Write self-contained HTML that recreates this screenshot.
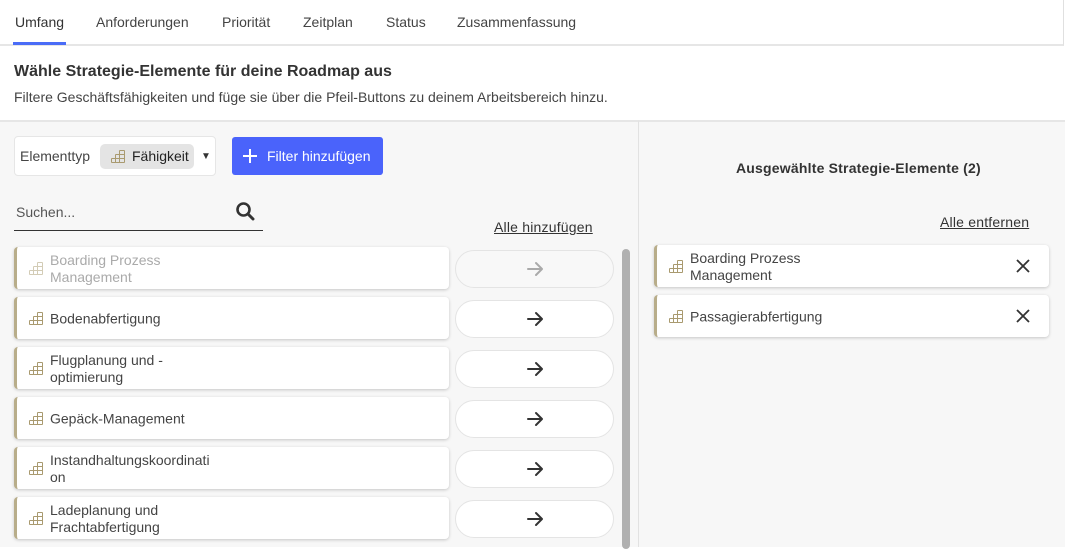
<!DOCTYPE html><html><head><meta charset="utf-8"><style>
*{box-sizing:border-box;margin:0;padding:0}
body{width:1065px;height:547px;overflow:hidden;font-family:"Liberation Sans",sans-serif;background:#fff;color:#333;position:relative}
.tabs{position:absolute;left:0;top:0;width:1064px;height:46px;border-right:1px solid #e0e0e0;border-bottom:2px solid #e6e6e6}
.tab{position:absolute;top:14px;font-size:14px;color:#444}
.ul{position:absolute;left:13px;top:42px;width:53px;height:3px;background:#4a6cf7}
h1{position:absolute;left:14px;top:63px;font-size:16px;font-weight:bold;color:#333}
.sub{position:absolute;left:14px;top:89px;font-size:14px;color:#444}
.left{position:absolute;left:0;top:120px;width:638px;height:427px;background:#f7f7f7;border-top:2px solid #e6e6e6}
.right{position:absolute;left:638px;top:120px;width:427px;height:427px;background:#f7f7f7;border-top:2px solid #e6e6e6;border-left:1px solid #e2e2e2}
.abs{position:absolute}
.card{position:absolute;left:14px;width:435px;height:42px;background:#fff;border-left:3px solid #b8ad8a;border-radius:4px;box-shadow:0 1px 3px rgba(0,0,0,.2);font-size:14px;color:#444}
.card .t{position:absolute;left:33px;top:22px;transform:translateY(-50%);line-height:17px}
.card svg{position:absolute;left:11px;top:14px}
.btn{position:absolute;left:455px;width:159px;height:38px;background:#fff;border:1px solid #e4e4e4;border-radius:19px}
.btn svg{position:absolute;left:70px;top:9px}
.rc{position:absolute;left:654px;width:395px;height:42px;background:#fff;border-left:3px solid #b8ad8a;border-radius:4px;box-shadow:0 1px 3px rgba(0,0,0,.2);font-size:14px;color:#444}
.rc .t{position:absolute;left:33px;top:22px;transform:translateY(-50%);line-height:17px}
.rc svg.i{position:absolute;left:11px;top:14px}
.rc .x{position:absolute;right:18px;top:13px}
</style></head><body>
<div class="tabs">
<span class="tab" style="left:15px;color:#333">Umfang</span>
<span class="tab" style="left:96px">Anforderungen</span>
<span class="tab" style="left:222px">Priorität</span>
<span class="tab" style="left:303px">Zeitplan</span>
<span class="tab" style="left:386px">Status</span>
<span class="tab" style="left:457px">Zusammenfassung</span>
<div class="ul"></div>
</div>
<h1>Wähle Strategie-Elemente für deine Roadmap aus</h1>
<div class="sub">Filtere Geschäftsfähigkeiten und füge sie über die Pfeil-Buttons zu deinem Arbeitsbereich hinzu.</div>
<div class="left"></div>
<div class="right"></div>

<svg width="0" height="0" style="position:absolute"><defs>
<g id="ic" fill="none" stroke="#a99a6f" stroke-width="1"><path d="M1.5 13.5h13M1.5 9.5h13M5.5 5.5h9M9.5 1.5h5M1.5 9.5v4M5.5 5.5v8M9.5 1.5v12M14.5 1.5v12"/></g>
<g id="ar" fill="none" stroke-width="2" stroke-linecap="round" stroke-linejoin="round"><path d="M2 9h14M10 3l6 6-6 6"/></g>
</defs></svg>

<div class="abs" style="left:14px;top:136px;width:202px;height:40px;background:#fff;border:1px solid #e6e6e6;border-radius:4px"></div>
<span class="abs" style="left:20px;top:148px;font-size:14px;color:#444">Elementtyp</span>
<div class="abs" style="left:100px;top:144px;width:94px;height:25px;background:#e4e4e4;border-radius:5px"></div>
<svg class="abs" style="left:110px;top:149px" width="16" height="15"><use href="#ic"/></svg>
<span class="abs" style="left:132px;top:148px;font-size:14px;color:#222">Fähigkeit</span>
<span class="abs" style="left:201px;top:151px;font-size:10px;color:#333">▼</span>
<div class="abs" style="left:232px;top:137px;width:151px;height:38px;background:#4a63fb;border-radius:3px;color:#fff;font-size:14px;line-height:38px;padding-left:35px">Filter hinzufügen</div>
<svg class="abs" style="left:242px;top:148px" width="16" height="16"><path d="M8 1v14M1 8h14" stroke="#fff" stroke-width="2"/></svg>

<span class="abs" style="left:16px;top:204px;font-size:14px;color:#555">Suchen...</span>
<svg class="abs" style="left:235px;top:201px" width="20" height="20"><circle cx="8.5" cy="8.5" r="6" fill="none" stroke="#333" stroke-width="2.6"/><path d="M13 13l5 5" stroke="#333" stroke-width="3" stroke-linecap="round"/></svg>
<div class="abs" style="left:14px;top:230px;width:249px;height:1px;background:#333"></div>
<span class="abs" style="left:494px;top:219px;font-size:14px;color:#333;text-decoration:underline;letter-spacing:.2px">Alle hinzufügen</span>

<div class="card" style="top:247px;color:#aaa"><svg width="16" height="15" style="opacity:.5"><use href="#ic"/></svg><div class="t">Boarding Prozess<br>Management</div></div>
<div class="card" style="top:297px"><svg width="16" height="15"><use href="#ic"/></svg><div class="t">Bodenabfertigung</div></div>
<div class="card" style="top:347px"><svg width="16" height="15"><use href="#ic"/></svg><div class="t">Flugplanung und -<br>optimierung</div></div>
<div class="card" style="top:397px"><svg width="16" height="15"><use href="#ic"/></svg><div class="t">Gepäck-Management</div></div>
<div class="card" style="top:447px"><svg width="16" height="15"><use href="#ic"/></svg><div class="t">Instandhaltungskoordinati<br>on</div></div>
<div class="card" style="top:497px"><svg width="16" height="15"><use href="#ic"/></svg><div class="t">Ladeplanung und<br>Frachtabfertigung</div></div>

<div class="btn" style="top:250px;background:#f8f8f8"><svg width="18" height="18" stroke="#aaa"><use href="#ar"/></svg></div>
<div class="btn" style="top:300px"><svg width="18" height="18" stroke="#333"><use href="#ar"/></svg></div>
<div class="btn" style="top:350px"><svg width="18" height="18" stroke="#333"><use href="#ar"/></svg></div>
<div class="btn" style="top:400px"><svg width="18" height="18" stroke="#333"><use href="#ar"/></svg></div>
<div class="btn" style="top:450px"><svg width="18" height="18" stroke="#333"><use href="#ar"/></svg></div>
<div class="btn" style="top:500px"><svg width="18" height="18" stroke="#333"><use href="#ar"/></svg></div>
<div class="abs" style="left:622px;top:249px;width:8px;height:300px;background:#b0b0b0;border-radius:4px"></div>

<span class="abs" style="left:736px;top:160px;font-size:14px;font-weight:bold;color:#333;letter-spacing:.2px">Ausgewählte Strategie-Elemente (2)</span>
<span class="abs" style="left:940px;top:214px;font-size:14px;color:#333;text-decoration:underline;letter-spacing:.2px">Alle entfernen</span>
<div class="rc" style="top:245px"><svg class="i" width="16" height="15"><use href="#ic"/></svg><div class="t">Boarding Prozess<br>Management</div><svg class="x" width="16" height="16"><path d="M2 2l12 12M14 2L2 14" stroke="#333" stroke-width="1.8"/></svg></div>
<div class="rc" style="top:295px"><svg class="i" width="16" height="15"><use href="#ic"/></svg><div class="t">Passagierabfertigung</div><svg class="x" width="16" height="16"><path d="M2 2l12 12M14 2L2 14" stroke="#333" stroke-width="1.8"/></svg></div>
</body></html>
